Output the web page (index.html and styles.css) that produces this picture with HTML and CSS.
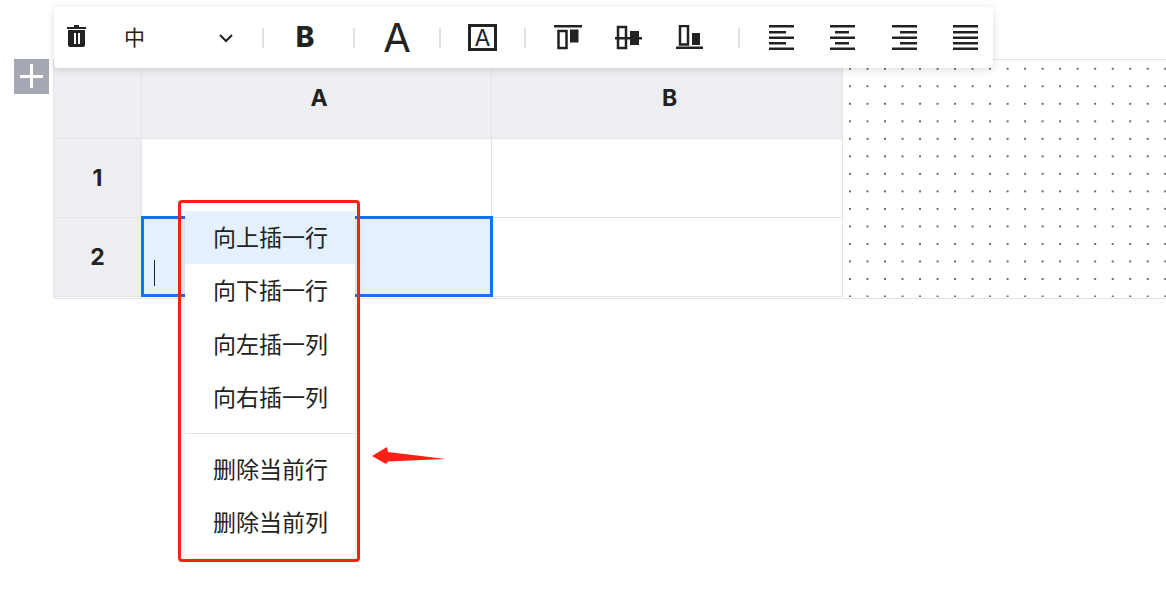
FILE: index.html
```html
<!DOCTYPE html>
<html lang="zh-CN">
<head>
  <meta charset="UTF-8">
  <meta name="viewport" content="width=device-width, initial-scale=1.0">
  <title>表格编辑</title>
  <link rel="stylesheet" href="styles.css">
</head>
<body>

  <!-- table sheet -->
  <div class="sheet">
    <div class="grid">
      <div class="cell head"></div>
      <div class="cell head col-name">A</div>
      <div class="cell head col-name">B</div>
      <div class="cell head">1</div>
      <div class="cell"></div>
      <div class="cell"></div>
      <div class="cell head">2</div>
      <div class="cell selected"><span class="caret"></span></div>
      <div class="cell"></div>
    </div>
    <div class="dots"></div>
  </div>

  <div class="add-btn">
    <svg width="35" height="35" viewBox="0 0 35 35"><path d="M6 16h23v3H6zM16 5h3v24h-3z" fill="#fff"/></svg>
  </div>

  <!-- floating toolbar -->
  <div class="toolbar">
    <div class="tool trash">
      <svg width="28" height="28" viewBox="0 0 28 28"><path d="M4 3h19v2H4zM11 1h5v2h-5z" fill="#222"/><path fill-rule="evenodd" d="M5 6h17v15a2 2 0 0 1-2 2H7a2 2 0 0 1-2-2zM11 9v11h2V9zM15 9v11h2V9z" fill="#222"/></svg>
    </div>
    <div class="size-select">
      <span class="size-value">中</span>
      <svg width="16" height="10" viewBox="0 0 16 10"><path d="M2 2l6 6 6-6" fill="none" stroke="#222" stroke-width="2"/></svg>
    </div>
    <span class="sep sep-first"></span>
    <div class="tool bold-b">B</div>
    <span class="sep"></span>
    <div class="tool big-a">A</div>
    <span class="sep"></span>
    <div class="tool"><span class="box-a">A</span></div>
    <span class="sep sep-tight"></span>
    <div class="tool-group align-v">
      <div class="tool">
        <svg width="28" height="28" viewBox="0 0 28 28"><path d="M0 0h28v2.500H0z" fill="#222"/><rect x="4.500" y="6" width="8" height="17" fill="none" stroke="#222" stroke-width="2.500"/><path d="M16 4.500h8.500v13H16z" fill="#222"/></svg>
      </div>
      <div class="tool">
        <svg width="28" height="28" viewBox="0 0 28 28"><path d="M0 12h27v2.500H0z" fill="#222"/><rect x="3" y="2" width="8" height="21" fill="none" stroke="#222" stroke-width="2.500"/><path d="M15 6h9v14h-9z" fill="#222"/></svg>
      </div>
      <div class="tool">
        <svg width="28" height="28" viewBox="0 0 28 28"><path d="M1 21.500h27V24H1z" fill="#222"/><rect x="5" y="1" width="8" height="18.500" fill="none" stroke="#222" stroke-width="2.500"/><path d="M17 8h8v12h-8z" fill="#222"/></svg>
      </div>
    </div>
    <span class="sep"></span>
    <div class="tool-group align-h">
      <div class="tool">
        <svg width="28" height="28" viewBox="0 0 28 28"><path d="M1 0h25v2.500H1zM1 6h17v2.500H1zM1 11.500h25V14H1zM1 17h17v2.500H1zM1 22.500h25V25H1z" fill="#222"/></svg>
      </div>
      <div class="tool">
        <svg width="28" height="28" viewBox="0 0 28 28"><path d="M1 0h25v2.500H1zM6 6h14v2.500H6zM1 11.500h25V14H1zM6 17h14v2.500H6zM1 22.500h25V25H1z" fill="#222"/></svg>
      </div>
      <div class="tool">
        <svg width="28" height="28" viewBox="0 0 28 28"><path d="M1 0h25v2.500H1zM9 6h17v2.500H9zM1 11.500h25V14H1zM9 17h17v2.500H9zM1 22.500h25V25H1z" fill="#222"/></svg>
      </div>
      <div class="tool">
        <svg width="28" height="28" viewBox="0 0 28 28"><path d="M1 0h25v2.500H1zM1 6h25v2.500H1zM1 11.500h25V14H1zM1 17h25v2.500H1zM1 22.500h25V25H1z" fill="#222"/></svg>
      </div>
    </div>
  </div>

  <!-- right click menu -->
  <ul class="context-menu">
    <li class="active">向上插一行</li>
    <li>向下插一行</li>
    <li>向左插一列</li>
    <li>向右插一列</li>
    <li class="divider"></li>
    <li>删除当前行</li>
    <li>删除当前列</li>
  </ul>

  <!-- red annotation -->
  <div class="mark-box"></div>
  <svg class="mark-arrow" width="76" height="19" viewBox="0 0 76 19"><polygon points="0,9 15,0 16,5 74,12 16,14.500 14,17" fill="#ff2015"/></svg>

</body>
</html>
```

FILE: styles.css
```css
body {
  margin: 0;
  font-family: "Inter", "Noto Sans CJK SC", sans-serif;
  color: #222;
  background: #fff;
}

.sheet {
  display: flex;
  margin: 59px 0 0 53px;
  padding-bottom: 1px;
  border: 1px solid #e4e4e7;
  border-right: none;
}

.grid {
  flex: none;
  display: grid;
  grid-template-columns: 88px 350px 351px;
  grid-auto-rows: 79px;
}

/* canvas area right of the table */
.dots {
  flex: 1;
  background-image: radial-gradient(circle, #666 0.9px, transparent 1.2px);
  background-size: 17.53px 17.53px;
  background-position: -1.800px 0;
}

.cell {
  display: flex;
  align-items: center;
  justify-content: center;
  border-right: 1px solid #e4e4e7;
  border-bottom: 1px solid #e4e4e7;
  font-size: 23px;
  font-weight: 700;
}

.head {
  background: #eeeff3;
}

.col-name {
  padding: 0 0 2px 5px;
}

.selected {
  position: relative;
  background: #e5f0fe;
}

/* blue frame sits over the cell borders */
.selected::after {
  content: "";
  position: absolute;
  inset: -2px -2px -1px -1px;
  border: 3px solid #1570f5;
}

.caret {
  position: absolute;
  left: 12px;
  top: 42px;
  width: 1px;
  height: 26px;
  background: #222;
}

.add-btn {
  position: absolute;
  left: 14px;
  top: 59px;
  width: 35px;
  height: 35px;
  background: #a6a9b3;
}

.add-btn svg {
  display: block;
}

/* toolbar */
.toolbar {
  position: absolute;
  left: 54px;
  top: 7px;
  width: 930px;
  height: 61px;
  padding-left: 9px;
  display: flex;
  align-items: center;
  background: #fff;
  border-radius: 4px;
  box-shadow: 0 2px 8px rgba(0, 0, 0, 0.14);
}

.tool {
  flex: none;
  width: 28px;
  height: 28px;
  display: flex;
  align-items: center;
  justify-content: center;
}

.trash {
  margin-top: 1px;
}

.tool-group {
  display: flex;
  flex: none;
  margin-top: 3px;
}

.align-v {
  gap: 32.500px;
  margin-right: 7px;
}

.align-h {
  gap: 33.300px;
}

.sep {
  flex: none;
  width: 2px;
  height: 20px;
  margin: 0 28px;
  background: #e2e2e2;
}

.sep-first {
  margin-right: 27px;
}

.sep-tight {
  margin-left: 27px;
}

.size-select {
  flex: none;
  width: 109px;
  margin-left: 34px;
  display: flex;
  align-items: center;
  justify-content: space-between;
  font-size: 21px;
}

.size-value {
  margin-left: -1px;
  padding-bottom: 4px;
}

.bold-b {
  margin-right: 6px;
  padding-bottom: 2px;
  font-size: 28px;
  font-weight: 800;
}

.big-a {
  font-size: 40px;
  font-weight: 400;
}

.box-a {
  flex: none;
  width: 23px;
  height: 21px;
  margin-left: -1px;
  display: flex;
  align-items: center;
  justify-content: center;
  border: 3px solid #222;
  font-size: 23px;
  font-weight: 400;
}

/* context menu */
.context-menu {
  position: absolute;
  left: 185px;
  top: 203px;
  width: 170px;
  margin: 0;
  padding: 8px 0;
  list-style: none;
  background: #fff;
  border-radius: 6px;
  box-shadow: 0 2px 10px rgba(0, 0, 0, 0.12);
  font-size: 23px;
  font-weight: 400;
}

.context-menu li {
  height: 53.400px;
  line-height: 55.400px;
  padding-left: 28px;
}

.context-menu .active {
  background: #e5f0fe;
}

.context-menu .divider {
  height: 1px;
  margin: 8px 0 9.500px;
  padding: 0;
  background: #e4e4e7;
}

/* annotation */
.mark-box {
  position: absolute;
  left: 178px;
  top: 200px;
  width: 176px;
  height: 356px;
  border: 3px solid #ff2015;
  border-radius: 4px;
}

.mark-arrow {
  position: absolute;
  left: 372px;
  top: 447px;
}
```
